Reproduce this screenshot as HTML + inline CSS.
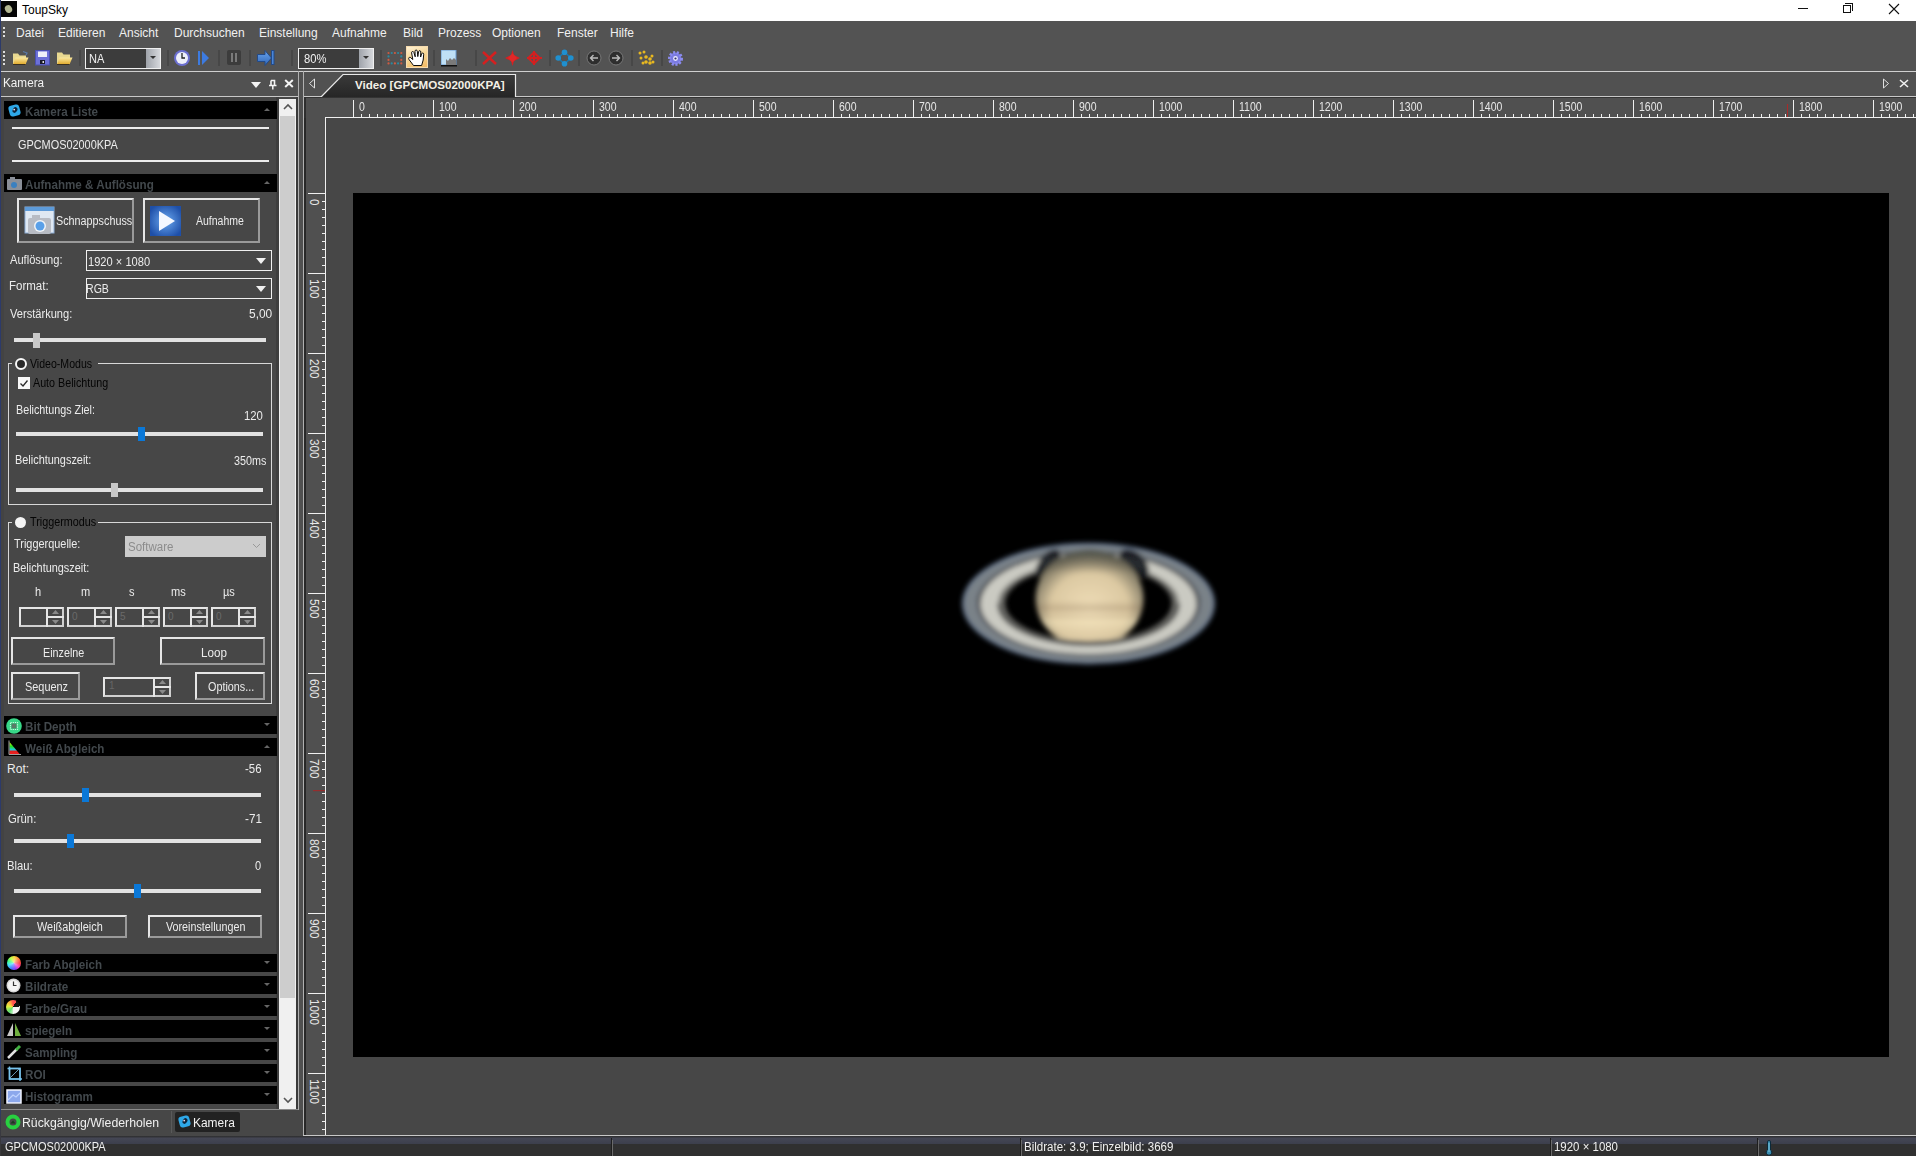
<!DOCTYPE html>
<html><head><meta charset="utf-8">
<style>
*{box-sizing:border-box}
html,body{margin:0;padding:0;width:1916px;height:1156px;overflow:hidden;background:#474747;font-family:"Liberation Sans",sans-serif;color:#e8e8e8}
.a{position:absolute}
.t{position:absolute;white-space:nowrap;line-height:1}
#title{left:0;top:0;width:1916px;height:21px;background:#fff}
#menubar{left:0;top:21px;width:1916px;height:24px;background:#535353}
#toolbar{left:0;top:45px;width:1916px;height:26px;background:#535353}
.mi{position:absolute;top:26px;font-size:12px;color:#f0f0f0;line-height:14px}
.sep{position:absolute;top:50px;width:2px;height:16px;background:#474747}
.hdr{position:absolute;left:4px;width:273px;height:18px;background:#000}
.hdr .ht{position:absolute;left:21px;top:5.2px;font-size:12.5px;font-weight:bold;color:#42484c;white-space:nowrap;line-height:1;transform-origin:0 0;transform:scaleX(.93)}
.hdr .car{position:absolute;right:7px;top:7px;width:0;height:0;border-left:3.5px solid transparent;border-right:3.5px solid transparent}
.hdr .car.up{border-bottom:3px solid #666}
.hdr .car.dn{border-top:3px solid #666}
.lbl{position:absolute;font-size:11px;color:#eaeaea;white-space:nowrap;line-height:12px}
.track{position:absolute;height:4px;background:#e2e2e2}
.thumb{position:absolute;width:7px;height:14px;background:#0a78d8}
.thumbg{position:absolute;width:7px;height:14px;background:#c8c8c8}
.btn{position:absolute;border:2px solid #e6e6e6;border-right-color:#9a9a9a;border-bottom-color:#9a9a9a;background:#474747;font-size:11px;color:#ededed;text-align:center;white-space:nowrap}
.combo{position:absolute;border:1px solid #f0f0f0;background:#474747;font-size:11px;color:#f0f0f0;white-space:nowrap}
.grp{position:absolute;border:1px solid #d8d8d8}
.tx{position:absolute;font-size:12px;line-height:1;white-space:nowrap;transform-origin:0 0}
.rl{position:absolute;font-size:11px;color:#e6e6e6;line-height:11px;white-space:nowrap}
</style></head><body>
<!-- window left border -->
<div class="a" style="left:0;top:0;width:1px;height:1110px;background:#2c3a6a;z-index:50"></div><div class="a" style="left:0;top:1110px;width:1px;height:46px;background:linear-gradient(#2c3a6a,#3a3a44 30%,#383838);z-index:50"></div>

<!-- TITLE BAR -->
<div id="title" class="a">
  <div class="a" style="left:1px;top:1px;width:16px;height:16px;background:#050505"></div>
  <div class="a" style="left:5px;top:5px;width:7px;height:8px;border-radius:50%;background:#b4b894;transform:rotate(-30deg)"></div>
  <div class="a" style="left:1798px;top:8px;width:10px;height:1px;background:#111"></div>
  <div class="a" style="left:1845px;top:3px;width:8px;height:8px;border:1px solid #111;border-left:none;border-bottom:none"></div>
  <div class="a" style="left:1843px;top:5px;width:8px;height:8px;border:1px solid #111;background:#fff"></div>
  <svg class="a" style="left:1888px;top:3px" width="12" height="12"><path d="M1 1L11 11M11 1L1 11" stroke="#111" stroke-width="1.1"/></svg>
</div>

<!-- MENU BAR -->
<div id="menubar" class="a"></div>
<div class="a" style="left:3px;top:27px;width:2px;height:12px;background:repeating-linear-gradient(#ddd 0 2px,transparent 2px 4px)"></div>
<div class="mi" style="left:16px">Datei</div>
<div class="mi" style="left:58px">Editieren</div>
<div class="mi" style="left:119px">Ansicht</div>
<div class="mi" style="left:174px">Durchsuchen</div>
<div class="mi" style="left:259px">Einstellung</div>
<div class="mi" style="left:332px">Aufnahme</div>
<div class="mi" style="left:403px">Bild</div>
<div class="mi" style="left:438px">Prozess</div>
<div class="mi" style="left:492px">Optionen</div>
<div class="mi" style="left:557px">Fenster</div>
<div class="mi" style="left:610px">Hilfe</div>

<!-- TOOLBAR -->
<div id="toolbar" class="a"></div>
<div class="a" style="left:3px;top:51px;width:2px;height:14px;background:repeating-linear-gradient(#ddd 0 2px,transparent 2px 4px)"></div>
<!-- open folder -->
<svg class="a" style="left:12px;top:50px" width="17" height="16"><defs><linearGradient id="fld" x1="0" y1="0" x2="0" y2="1"><stop offset="0" stop-color="#fbe9a0"/><stop offset="1" stop-color="#e0a828"/></linearGradient></defs><path d="M1 3.5h5l1.5 2H14v8.5H1z" fill="#e8d890"/><path d="M3.5 7.5H16.5L13.5 14.5H1z" fill="url(#fld)"/><path d="M1 14.5h12.5" stroke="#3a3020" stroke-width="1"/><path d="M11 1.5l4 1.5-1 2" stroke="#5a7aaa" stroke-width="1.3" fill="none"/></svg>
<!-- save -->
<svg class="a" style="left:35px;top:50px" width="15" height="16"><rect x="0.5" y="0.5" width="14" height="14.5" fill="#6c70d8" stroke="#4a50b0"/><rect x="3" y="1.5" width="9" height="5.5" fill="#eef0fa"/><rect x="5" y="10" width="5" height="4" fill="#1a1a2a"/><rect x="7.5" y="11" width="1.5" height="2" fill="#ddd"/></svg>
<!-- folder -->
<svg class="a" style="left:56px;top:51px" width="17" height="15"><path d="M1 1.5h5l1.5 2H14v9.5H1z" fill="#e8d890"/><path d="M3.5 6.5H16.5L13.5 13.5H1z" fill="url(#fld)"/><path d="M1 13.5h12.5" stroke="#3a3020" stroke-width="1"/></svg>
<div class="sep" style="left:79px"></div>
<!-- NA combo -->
<div class="a" style="left:85px;top:48px;width:76px;height:21px;border:1px solid #f0f0f0;background:#3c3c3c"></div>
<div class="a" style="left:146px;top:49px;width:14px;height:19px;background:linear-gradient(90deg,#9fa3aa,#d6d8dc)"></div>
<div class="a" style="left:150px;top:56px;width:0;height:0;border-left:3px solid transparent;border-right:3px solid transparent;border-top:3px solid #333"></div>
<div class="sep" style="left:167px"></div>
<!-- clock -->
<svg class="a" style="left:173px;top:49px" width="18" height="18"><circle cx="9" cy="9" r="8" fill="#6b6fd0"/><circle cx="9" cy="9" r="6" fill="#eef0fa"/><path d="M9 4v5h3" stroke="#222" stroke-width="1.3" fill="none"/></svg>
<!-- play next -->
<svg class="a" style="left:198px;top:50px" width="12" height="16"><rect x="0" y="1" width="2" height="14" fill="#3d7be0"/><path d="M4 1l7 7-7 7z" fill="#3d7be0"/></svg>
<div class="sep" style="left:218px"></div>
<!-- pause -->
<svg class="a" style="left:227px;top:50px" width="14" height="15"><rect x="0" y="0" width="14" height="15" rx="2" fill="#3c3c3c"/><rect x="4" y="3" width="2" height="9" fill="#7a7a7a"/><rect x="8" y="3" width="2" height="9" fill="#7a7a7a"/></svg>
<div class="sep" style="left:249px"></div>
<!-- arrow to bar -->
<svg class="a" style="left:256px;top:49px" width="20" height="18"><defs><linearGradient id="arg" x1="0" y1="0" x2="0" y2="1"><stop offset="0" stop-color="#6aa4ec"/><stop offset="1" stop-color="#2f66b8"/></linearGradient></defs><path d="M1.5 5.5h7.5V1.5l6.5 7.5-6.5 7.5v-4H1.5z" fill="url(#arg)" stroke="#234a88" stroke-width="1"/><rect x="15.5" y="1.5" width="2.5" height="14" fill="#4a86d8" stroke="#234a88" stroke-width="1"/></svg>
<div class="sep" style="left:291px"></div>
<!-- 80% combo -->
<div class="a" style="left:298px;top:48px;width:76px;height:21px;border:1px solid #f0f0f0;background:#3c3c3c"></div>
<div class="a" style="left:359px;top:49px;width:14px;height:19px;background:linear-gradient(90deg,#9fa3aa,#d6d8dc)"></div>
<div class="a" style="left:363px;top:56px;width:0;height:0;border-left:3px solid transparent;border-right:3px solid transparent;border-top:3px solid #333"></div>
<div class="sep" style="left:380px"></div>
<!-- dotted rect -->
<svg class="a" style="left:386px;top:51px" width="17" height="15"><circle cx="2.5" cy="2" r="1.1" fill="#d05a40"/><circle cx="2.5" cy="12.4" r="1.1" fill="#d05a40"/><circle cx="5.7" cy="2" r="1.1" fill="#2a8aa0"/><circle cx="5.7" cy="12.4" r="1.1" fill="#2a8aa0"/><circle cx="8.9" cy="2" r="1.1" fill="#d05a40"/><circle cx="8.9" cy="12.4" r="1.1" fill="#d05a40"/><circle cx="12.1" cy="2" r="1.1" fill="#2a8aa0"/><circle cx="12.1" cy="12.4" r="1.1" fill="#2a8aa0"/><circle cx="15.3" cy="2" r="1.1" fill="#d05a40"/><circle cx="15.3" cy="12.4" r="1.1" fill="#d05a40"/><circle cx="2.5" cy="5.4" r="1.1" fill="#2a8aa0"/><circle cx="15.3" cy="5.4" r="1.1" fill="#2a8aa0"/><circle cx="2.5" cy="8.9" r="1.1" fill="#d05a40"/><circle cx="15.3" cy="8.9" r="1.1" fill="#d05a40"/></svg>
<!-- hand active -->
<div class="a" style="left:406px;top:46px;width:22px;height:22px;background:linear-gradient(160deg,#fff4dc,#f8d898 45%,#f2b860);box-shadow:inset 0 0 0 1px #f6dcb0"></div>
<svg class="a" style="left:408px;top:49px" width="18" height="18"><path d="M5.5 16.5L1 10.5C0.3 9.5 0.8 8 2.2 8.3L4.8 10.5 3.6 3.8C3.4 2.3 5.4 2 5.8 3.3L7.2 7.8 7 2.2C7 0.6 9.2 0.6 9.3 2.2L9.8 7.6 10.6 2.6C10.9 1.2 12.8 1.4 12.8 2.9L12.6 8 13.6 4.8C14 3.6 15.8 3.8 15.7 5.2L15.2 11 13.6 16.5z" fill="#fff" stroke="#000" stroke-width="0.95" stroke-linejoin="round"/></svg>
<div class="sep" style="left:433px"></div>
<!-- histogram img -->
<svg class="a" style="left:441px;top:50px" width="17" height="17"><rect x="0" y="0" width="15" height="15" fill="#bfe0f6" stroke="#6b9bd1"/><path d="M5 15V9l2 2 2-3 2 2 2-2 2 2v5z" fill="#7a7a7a"/><rect x="0" y="15" width="16" height="1.5" fill="#111"/></svg>
<div class="sep" style="left:475px"></div>
<!-- red X -->
<svg class="a" style="left:481px;top:50px" width="17" height="16"><path d="M2 2L15 14M15 2L2 14" stroke="#d42020" stroke-width="2.5"/></svg>
<!-- red cross -->
<svg class="a" style="left:504px;top:50px" width="17" height="16"><path d="M8.5 0L10 5 16 8 10 11 8.5 16 7 11 1 8 7 5z" fill="#d42020"/><path d="M8.5 3.5L13 8 8.5 12.5 4 8z" fill="#e02828"/></svg>
<!-- red diamond -->
<svg class="a" style="left:526px;top:50px" width="17" height="16"><path d="M8 1v14M1 8h15" stroke="#d42020" stroke-width="2"/><rect x="4" y="4" width="8" height="8" fill="none" stroke="#d42020" stroke-width="2" transform="rotate(45 8 8)"/></svg>
<div class="sep" style="left:549px"></div>
<!-- blue dots -->
<svg class="a" style="left:555px;top:49px" width="19" height="18"><path d="M9.5 3L3 9 9.5 15 16 9z" fill="none" stroke="#1a7ab0" stroke-width="1.5"/><circle cx="9.5" cy="3.2" r="2.8" fill="#1f90d0"/><circle cx="9.5" cy="14.8" r="2.8" fill="#1f90d0"/><circle cx="3.2" cy="9" r="2.8" fill="#1f90d0"/><circle cx="15.8" cy="9" r="2.8" fill="#1f90d0"/></svg>
<div class="sep" style="left:578px"></div>
<!-- circle arrows -->
<svg class="a" style="left:586px;top:50px" width="16" height="16"><circle cx="8" cy="8" r="7" fill="#2e2e2e" stroke="#777" stroke-width="1"/><path d="M12 8H4.5M7.5 5l-3 3 3 3" stroke="#bbb" stroke-width="1.4" fill="none"/></svg>
<svg class="a" style="left:608px;top:50px" width="16" height="16"><circle cx="8" cy="8" r="7" fill="#2e2e2e" stroke="#777" stroke-width="1"/><path d="M4 8h7.5M8.5 5l3 3-3 3" stroke="#bbb" stroke-width="1.4" fill="none"/></svg>
<div class="sep" style="left:631px"></div>
<!-- yellow dots -->
<svg class="a" style="left:638px;top:50px" width="17" height="16"><g fill="#e8b820"><circle cx="2" cy="3" r="1.5"/><circle cx="6" cy="2" r="1.5"/><circle cx="3" cy="8" r="1.5"/><circle cx="8" cy="7" r="1.8"/><circle cx="12" cy="9" r="1.8"/><circle cx="14" cy="6" r="1.5"/><circle cx="8" cy="12" r="1.8"/><circle cx="12" cy="13" r="1.8"/><circle cx="15" cy="12" r="1.5"/><circle cx="5" cy="13" r="1.5"/></g></svg>
<div class="sep" style="left:661px"></div>
<!-- gear -->
<svg class="a" style="left:667px;top:50px" width="17" height="17"><circle cx="8.5" cy="8.5" r="6" fill="#7a7ae0" stroke="#8c8cf0" stroke-width="3" stroke-dasharray="2 1.6"/><circle cx="8.5" cy="8.5" r="2.4" fill="#e8e8ff"/><circle cx="8.5" cy="8.5" r="1.1" fill="#30306a"/></svg>

<!-- separator line under toolbar -->
<div class="a" style="left:1px;top:71px;width:1915px;height:1px;background:#d0d0d0"></div>

<!-- LEFT PANEL -->
<div class="a" style="left:1px;top:72px;width:297px;height:24px;background:#515151"></div>
<div class="a" style="left:251px;top:82px;width:0;height:0;border-left:5px solid transparent;border-right:5px solid transparent;border-top:6px solid #f4f4f4"></div>
<svg class="a" style="left:268px;top:79px" width="9" height="11"><path d="M3 1.5h3.5v4.5M3 1.5v4.5" stroke="#f4f4f4" stroke-width="1.6" fill="none"/><path d="M1 6.5h7.5M4.8 6.5v4" stroke="#f4f4f4" stroke-width="1.5" fill="none"/></svg>
<svg class="a" style="left:284px;top:79px" width="10" height="9"><path d="M1.2 1L8.8 8M8.8 1L1.2 8" stroke="#f4f4f4" stroke-width="2"/></svg>
<div class="a" style="left:298px;top:71px;width:1px;height:1039px;background:#b0b0b0"></div>
<div class="a" style="left:1px;top:96px;width:297px;height:1px;background:#c8c8c8"></div>
<div class="a" style="left:299px;top:72px;width:4px;height:1063px;background:#505050"></div>
<!-- scrollbar -->
<div class="a" style="left:276px;top:97px;width:3px;height:1012px;background:#3e3e3e"></div><div class="a" style="left:279px;top:99px;width:17px;height:1010px;background:#f0f0f0"></div><div class="a" style="left:296px;top:97px;width:2px;height:1012px;background:#3a3a3a"></div><div class="a" style="left:1px;top:97px;width:3px;height:1012px;background:#434343"></div>
<div class="a" style="left:280px;top:116px;width:15px;height:882px;background:#cdcdcd"></div>
<svg class="a" style="left:282px;top:103px" width="12" height="8"><path d="M2 6l4-4 4 4" stroke="#555" stroke-width="1.6" fill="none"/></svg>
<svg class="a" style="left:282px;top:1096px" width="12" height="8"><path d="M2 2l4 4 4-4" stroke="#555" stroke-width="1.6" fill="none"/></svg>

<!-- Kamera Liste -->
<div class="hdr" style="top:101px"><svg class="a" style="left:3px;top:2px" width="15" height="15"><rect x="2" y="2" width="11" height="11" rx="3" fill="#2ea8e8" transform="rotate(-15 7.5 7.5)"/><ellipse cx="8" cy="7" rx="2.2" ry="3" fill="#10243a" transform="rotate(30 8 7)"/><circle cx="7.2" cy="6.6" r="0.9" fill="#f0e0f0"/></svg><div class="ht">Kamera Liste</div><div class="car up"></div></div>
<div class="a" style="left:12px;top:127px;width:257px;height:2px;background:#ececec"></div>
<div class="a" style="left:12px;top:160px;width:257px;height:2px;background:#ececec"></div>

<!-- Aufnahme & Auflösung -->
<div class="hdr" style="top:174px"><svg class="a" style="left:3px;top:3px" width="16" height="13"><rect x="0" y="2" width="15" height="11" rx="1" fill="#8a8f98"/><rect x="3" y="0" width="5" height="3" fill="#8a8f98"/><circle cx="7" cy="8" r="3" fill="#3a80c0"/></svg><div class="ht">Aufnahme &amp; Auflösung</div><div class="car up"></div></div>
<div class="btn" style="left:17px;top:198px;width:117px;height:45px"></div>
<svg class="a" style="left:24px;top:206px" width="32" height="31"><rect x="1" y="1" width="29" height="26" fill="#dfe8f2" stroke="#8fb0d8"/><rect x="1" y="1" width="29" height="4" fill="#5c9ad8"/><rect x="4" y="12" width="23" height="16" rx="2" fill="#b8bcc4"/><rect x="8" y="9" width="8" height="4" fill="#b8bcc4"/><circle cx="16" cy="20" r="6" fill="#f0f4f8"/><circle cx="16" cy="20" r="4.5" fill="#5aa0e8"/></svg>
<div class="btn" style="left:143px;top:198px;width:117px;height:45px"></div>
<svg class="a" style="left:150px;top:206px" width="31" height="30"><defs><radialGradient id="pg" cx="50%" cy="50%" r="60%"><stop offset="0" stop-color="#6aa8f0"/><stop offset="1" stop-color="#1e4fa8"/></radialGradient></defs><rect x="0" y="0" width="31" height="30" fill="url(#pg)"/><path d="M9 5l16 10-16 10z" fill="#f4f8ff"/></svg>

<div class="combo" style="left:86px;top:250px;width:186px;height:21px"></div>
<div class="a" style="left:256px;top:258px;width:0;height:0;border-left:5px solid transparent;border-right:5px solid transparent;border-top:6px solid #f0f0f0"></div>
<div class="combo" style="left:86px;top:278px;width:186px;height:21px"></div>
<div class="a" style="left:256px;top:286px;width:0;height:0;border-left:5px solid transparent;border-right:5px solid transparent;border-top:6px solid #f0f0f0"></div>
<div class="track" style="left:14px;top:338px;width:252px"></div>
<div class="thumbg" style="left:33px;top:333px;height:15px"></div>

<!-- Video-Modus group -->
<div class="grp" style="left:8px;top:363px;width:264px;height:142px"></div>
<div class="a" style="left:12px;top:356px;width:86px;height:14px;background:#474747"></div>
<div class="a" style="left:15px;top:358px;width:12px;height:12px;border-radius:50%;border:2px solid #f8f8f8;background:#2a2a2a"></div>
<div class="a" style="left:18px;top:377px;width:12px;height:12px;background:#f8f8f8"></div>
<svg class="a" style="left:19px;top:378px" width="10" height="10"><path d="M1.5 5.5l2.5 2.5 4.5-5.5" stroke="#2a2a2a" stroke-width="1.3" fill="none"/></svg>
<div class="track" style="left:16px;top:432px;width:247px"></div>
<div class="thumb" style="left:138px;top:427px;width:7px"></div>
<div class="track" style="left:16px;top:488px;width:247px"></div>
<div class="thumbg" style="left:111px;top:483px;width:7px"></div>

<!-- Triggermodus group -->
<div class="grp" style="left:8px;top:522px;width:264px;height:182px"></div>
<div class="a" style="left:12px;top:515px;width:86px;height:14px;background:#474747"></div>
<div class="a" style="left:15px;top:517px;width:11px;height:11px;border-radius:50%;background:#f4f4f4"></div>
<div class="a" style="left:125px;top:536px;width:141px;height:21px;background:#cccccc"></div>
<svg class="a" style="left:252px;top:543px" width="9" height="6"><path d="M1 1l3.5 3.5L8 1" stroke="#999" fill="none"/></svg>
<div class="t" style="left:72px;top:612px;font-size:10px;color:#6a6a6a">0</div>
<div class="t" style="left:120px;top:612px;font-size:10px;color:#6a6a6a">5</div>
<div class="t" style="left:168px;top:612px;font-size:10px;color:#6a6a6a">0</div>
<div class="t" style="left:216px;top:612px;font-size:10px;color:#6a6a6a">0</div>

<div class="a" style="left:19px;top:607px;width:45px;height:20px;border:2px solid #e6e6e6;border-right-color:#d0d0d0;border-bottom-color:#d0d0d0"></div>
<div class="a" style="left:46px;top:607px;width:2px;height:20px;background:#e6e6e6"></div>
<div class="a" style="left:46px;top:616px;width:18px;height:2px;background:#e6e6e6"></div>
<svg class="a" style="left:52px;top:610px" width="7" height="4"><path d="M0 4L3.5 0 7 4z" fill="#8a8a8a"/></svg>
<svg class="a" style="left:52px;top:620px" width="7" height="4"><path d="M0 0L3.5 4 7 0z" fill="#8a8a8a"/></svg>
<div class="a" style="left:67px;top:607px;width:45px;height:20px;border:2px solid #e6e6e6;border-right-color:#d0d0d0;border-bottom-color:#d0d0d0"></div>
<div class="a" style="left:94px;top:607px;width:2px;height:20px;background:#e6e6e6"></div>
<div class="a" style="left:94px;top:616px;width:18px;height:2px;background:#e6e6e6"></div>
<svg class="a" style="left:100px;top:610px" width="7" height="4"><path d="M0 4L3.5 0 7 4z" fill="#8a8a8a"/></svg>
<svg class="a" style="left:100px;top:620px" width="7" height="4"><path d="M0 0L3.5 4 7 0z" fill="#8a8a8a"/></svg>
<div class="a" style="left:115px;top:607px;width:45px;height:20px;border:2px solid #e6e6e6;border-right-color:#d0d0d0;border-bottom-color:#d0d0d0"></div>
<div class="a" style="left:142px;top:607px;width:2px;height:20px;background:#e6e6e6"></div>
<div class="a" style="left:142px;top:616px;width:18px;height:2px;background:#e6e6e6"></div>
<svg class="a" style="left:148px;top:610px" width="7" height="4"><path d="M0 4L3.5 0 7 4z" fill="#8a8a8a"/></svg>
<svg class="a" style="left:148px;top:620px" width="7" height="4"><path d="M0 0L3.5 4 7 0z" fill="#8a8a8a"/></svg>
<div class="a" style="left:163px;top:607px;width:45px;height:20px;border:2px solid #e6e6e6;border-right-color:#d0d0d0;border-bottom-color:#d0d0d0"></div>
<div class="a" style="left:190px;top:607px;width:2px;height:20px;background:#e6e6e6"></div>
<div class="a" style="left:190px;top:616px;width:18px;height:2px;background:#e6e6e6"></div>
<svg class="a" style="left:196px;top:610px" width="7" height="4"><path d="M0 4L3.5 0 7 4z" fill="#8a8a8a"/></svg>
<svg class="a" style="left:196px;top:620px" width="7" height="4"><path d="M0 0L3.5 4 7 0z" fill="#8a8a8a"/></svg>
<div class="a" style="left:211px;top:607px;width:45px;height:20px;border:2px solid #e6e6e6;border-right-color:#d0d0d0;border-bottom-color:#d0d0d0"></div>
<div class="a" style="left:238px;top:607px;width:2px;height:20px;background:#e6e6e6"></div>
<div class="a" style="left:238px;top:616px;width:18px;height:2px;background:#e6e6e6"></div>
<svg class="a" style="left:244px;top:610px" width="7" height="4"><path d="M0 4L3.5 0 7 4z" fill="#8a8a8a"/></svg>
<svg class="a" style="left:244px;top:620px" width="7" height="4"><path d="M0 0L3.5 4 7 0z" fill="#8a8a8a"/></svg>
<div class="btn" style="left:11px;top:637px;width:104px;height:28px;line-height:24px"></div>
<div class="btn" style="left:160px;top:637px;width:105px;height:28px;line-height:24px"></div>
<div class="btn" style="left:11px;top:672px;width:69px;height:28px;line-height:24px"></div>
<div class="a" style="left:103px;top:677px;width:68px;height:20px;border:2px solid #e6e6e6;border-right-color:#d0d0d0;border-bottom-color:#d0d0d0"></div>
<div class="a" style="left:153px;top:677px;width:2px;height:20px;background:#e6e6e6"></div>
<div class="a" style="left:153px;top:686px;width:18px;height:2px;background:#e6e6e6"></div>
<svg class="a" style="left:159px;top:680px" width="7" height="4"><path d="M0 4L3.5 0 7 4z" fill="#8a8a8a"/></svg>
<svg class="a" style="left:159px;top:690px" width="7" height="4"><path d="M0 0L3.5 4 7 0z" fill="#8a8a8a"/></svg>
<div class="t" style="left:109px;top:681px;font-size:10px;color:#666">1</div>
<div class="btn" style="left:195px;top:672px;width:70px;height:28px;line-height:24px"></div>

<!-- Bit Depth -->
<div class="hdr" style="top:716px"><svg class="a" style="left:2px;top:2px" width="16" height="16"><circle cx="8" cy="8" r="7.8" fill="#38d888"/><rect x="4.5" y="4.5" width="7" height="7" fill="none" stroke="#c8ffe0" stroke-width="1.2" stroke-dasharray="1.2 1"/><rect x="5.5" y="5.5" width="5" height="5" fill="#5a7a68"/></svg><div class="ht">Bit Depth</div><div class="car dn"></div></div>
<!-- Weiß Abgleich -->
<div class="hdr" style="top:738px"><svg class="a" style="left:0px;top:1px" width="17" height="17"><defs><linearGradient id="wbg" x1="0" y1="0" x2="0" y2="1"><stop offset="0" stop-color="#f0f020"/><stop offset=".35" stop-color="#20e020"/><stop offset=".62" stop-color="#20c8e0"/><stop offset=".75" stop-color="#e02020"/><stop offset="1" stop-color="#f02020"/></linearGradient></defs><path d="M5.5 3L16 15.5H5.5z" fill="url(#wbg)"/><path d="M5 1.5V15.5H17" stroke="#a0a0a0" stroke-width="1" fill="none"/></svg><div class="ht">Weiß Abgleich</div><div class="car up"></div></div>
<div class="track" style="left:14px;top:793px;width:247px"></div>
<div class="thumb" style="left:82px;top:788px;width:7px"></div>
<div class="track" style="left:14px;top:839px;width:247px"></div>
<div class="thumb" style="left:67px;top:834px;width:7px"></div>
<div class="track" style="left:14px;top:889px;width:247px"></div>
<div class="thumb" style="left:134px;top:884px;width:7px"></div>
<div class="btn" style="left:13px;top:915px;width:114px;height:23px;line-height:19px"></div>
<div class="btn" style="left:148px;top:915px;width:114px;height:23px;line-height:19px"></div>

<div class="hdr" style="top:954px"><div class="a" style="left:3px;top:2px;width:14px;height:14px;border-radius:50%;background:radial-gradient(circle,rgba(255,255,255,.55) 0,rgba(255,255,255,0) 60%),conic-gradient(from 90deg,#ff4040,#ff40c0,#8040ff,#4080ff,#40e0ff,#40ff80,#c0ff40,#ffd040,#ff8040,#ff4040)"></div><div class="ht">Farb Abgleich</div><div class="car dn"></div></div>
<div class="hdr" style="top:976px"><svg class="a" style="left:2px;top:2px" width="15" height="15"><circle cx="7.5" cy="7.5" r="7" fill="#d8d8d8"/><circle cx="7.5" cy="7.5" r="5.5" fill="#f4f4f4"/><path d="M7.5 3.5v4h3" stroke="#333" stroke-width="1.2" fill="none"/></svg><div class="ht">Bildrate</div><div class="car dn"></div></div>
<div class="hdr" style="top:998px"><div class="a" style="left:2px;top:2px;width:14px;height:14px;border-radius:50%;background:conic-gradient(from 30deg,#101010 0 55deg,#f4f4f4 55deg 150deg,#c8f0c8 150deg,#60e070 190deg,#e8f040 250deg,#ffa040 300deg,#ff5050 330deg,#ff5050 360deg)"></div><div class="ht">Farbe/Grau</div><div class="car dn"></div></div>
<div class="hdr" style="top:1020px"><svg class="a" style="left:2px;top:2px" width="16" height="15"><path d="M7 1L1 14h6z" fill="#c8c8c8"/><path d="M9 1l6 13H9z" fill="#70b040"/></svg><div class="ht">spiegeln</div><div class="car dn"></div></div>
<div class="hdr" style="top:1042px"><svg class="a" style="left:2px;top:2px" width="16" height="15"><path d="M2 14l9-9" stroke="#e0e0e0" stroke-width="2.5"/><path d="M10 6l4-4" stroke="#40b040" stroke-width="3"/></svg><div class="ht">Sampling</div><div class="car dn"></div></div>
<div class="hdr" style="top:1064px"><svg class="a" style="left:3px;top:2px" width="15" height="15"><rect x="2.5" y="2.5" width="10.5" height="10.5" fill="none" stroke="#78c4ee" stroke-width="1.8"/><path d="M3 12L12 3" stroke="#6a9ab8" stroke-width="1"/><path d="M0.5 2.5h3M2.5 0.5v3M12 13h3M13 12v3" stroke="#78c4ee" stroke-width="1.4"/></svg><div class="ht">ROI</div><div class="car dn"></div></div>
<div class="hdr" style="top:1086px"><svg class="a" style="left:2px;top:3px" width="16" height="15"><rect x="1" y="1" width="14" height="13" fill="#8ca8ec" stroke="#f4f6ff" stroke-width="1.5"/><path d="M2 11l5-5 3 2 4-4" stroke="#c0d4ff" fill="none" stroke-width="1.2"/></svg><div class="ht">Histogramm</div><div class="car dn"></div></div>


<!-- bottom tabs -->
<div class="a" style="left:1px;top:1109px;width:297px;height:1px;background:#8a8a8a"></div>
<div class="a" style="left:1px;top:1110px;width:302px;height:25px;background:#474747"></div>
<svg class="a" style="left:5px;top:1114px" width="16" height="16"><circle cx="8" cy="8" r="5.5" fill="none" stroke="#28d040" stroke-width="4"/><path d="M5.5 9.5l2.5-3 2.5 3z" fill="#1a3a20"/></svg>
<div class="a" style="left:171px;top:1111px;width:1px;height:22px;background:#5a5a5a"></div>
<div class="a" style="left:175px;top:1112px;width:65px;height:20px;background:#222;border-radius:2px"></div>
<svg class="a" style="left:177px;top:1114px" width="15" height="15"><rect x="2" y="2" width="11" height="11" rx="3" fill="#2ea8e8" transform="rotate(-15 7.5 7.5)"/><ellipse cx="8" cy="7" rx="2.2" ry="3" fill="#10243a" transform="rotate(30 8 7)"/><circle cx="7.2" cy="6.6" r="0.9" fill="#f0e0f0"/></svg>

<!-- DOC AREA -->
<div class="a" style="left:303px;top:71px;width:1px;height:1065px;background:#b0b0b0"></div>
<div class="a" style="left:304px;top:72px;width:1612px;height:24px;background:#515151"></div>
<div class="a" style="left:304px;top:96px;width:1612px;height:1px;background:#c8c8c8"></div>
<svg class="a" style="left:304px;top:72px" width="220" height="26"><defs><linearGradient id="tabg" x1="0" y1="0" x2="0" y2="1"><stop offset="0" stop-color="#3a3a3a"/><stop offset="1" stop-color="#262626"/></linearGradient></defs><path d="M17 25L39 2.5H211.5V25z" fill="url(#tabg)"/><path d="M16.5 25.5L39 2.5H211.5V25" stroke="#e8e8e8" stroke-width="1.2" fill="none"/></svg>
<div class="t" style="left:355px;top:79px;font-size:11.6px;font-weight:bold;color:#f4f0e6">Video [GPCMOS02000KPA]</div>
<svg class="a" style="left:308px;top:78px" width="8" height="11"><path d="M6.5 1L1.5 5.5 6.5 10z" stroke="#e0e0e0" stroke-width="1" fill="none"/></svg>
<svg class="a" style="left:1882px;top:78px" width="8" height="11"><path d="M1.5 1L6.5 5.5 1.5 10z" stroke="#e0e0e0" stroke-width="1" fill="none"/></svg>
<svg class="a" style="left:1899px;top:79px" width="10" height="9"><path d="M1 1L9 8M9 1L1 8" stroke="#f0f0f0" stroke-width="1.6"/></svg>
<div class="a" style="left:304px;top:97px;width:1612px;height:21px;background:#505050;border-top:1px solid #333"></div>
<div class="a" style="left:304px;top:118px;width:21px;height:1017px;background:linear-gradient(90deg,#282828 0 2px,#505050 2px)"></div><div class="a" style="left:304px;top:97px;width:2px;height:21px;background:#2e2e2e"></div>
<div class="a" style="left:326px;top:118px;width:1590px;height:1017px;background:#474747"></div>
<div class="a" style="left:325px;top:117px;width:1591px;height:1px;background:#f0f0f0"></div>
<div class="a" style="left:325px;top:117px;width:1px;height:1018px;background:#f0f0f0"></div>
<div class="a" style="left:303px;top:1135px;width:1613px;height:1px;background:#c8c8c8"></div>
<svg class="a" style="left:0;top:97px" width="1916" height="21"><g fill="#f0f0f0"><rect x="353" y="3" width="1" height="17"/><rect x="361" y="17" width="1" height="3"/><rect x="369" y="17" width="1" height="3"/><rect x="377" y="17" width="1" height="3"/><rect x="385" y="17" width="1" height="3"/><rect x="393" y="17" width="1" height="3"/><rect x="401" y="17" width="1" height="3"/><rect x="409" y="17" width="1" height="3"/><rect x="417" y="17" width="1" height="3"/><rect x="425" y="17" width="1" height="3"/><rect x="433" y="3" width="1" height="17"/><rect x="441" y="17" width="1" height="3"/><rect x="449" y="17" width="1" height="3"/><rect x="457" y="17" width="1" height="3"/><rect x="465" y="17" width="1" height="3"/><rect x="473" y="17" width="1" height="3"/><rect x="481" y="17" width="1" height="3"/><rect x="489" y="17" width="1" height="3"/><rect x="497" y="17" width="1" height="3"/><rect x="505" y="17" width="1" height="3"/><rect x="513" y="3" width="1" height="17"/><rect x="521" y="17" width="1" height="3"/><rect x="529" y="17" width="1" height="3"/><rect x="537" y="17" width="1" height="3"/><rect x="545" y="17" width="1" height="3"/><rect x="553" y="17" width="1" height="3"/><rect x="561" y="17" width="1" height="3"/><rect x="569" y="17" width="1" height="3"/><rect x="577" y="17" width="1" height="3"/><rect x="585" y="17" width="1" height="3"/><rect x="593" y="3" width="1" height="17"/><rect x="601" y="17" width="1" height="3"/><rect x="609" y="17" width="1" height="3"/><rect x="617" y="17" width="1" height="3"/><rect x="625" y="17" width="1" height="3"/><rect x="633" y="17" width="1" height="3"/><rect x="641" y="17" width="1" height="3"/><rect x="649" y="17" width="1" height="3"/><rect x="657" y="17" width="1" height="3"/><rect x="665" y="17" width="1" height="3"/><rect x="673" y="3" width="1" height="17"/><rect x="681" y="17" width="1" height="3"/><rect x="689" y="17" width="1" height="3"/><rect x="697" y="17" width="1" height="3"/><rect x="705" y="17" width="1" height="3"/><rect x="713" y="17" width="1" height="3"/><rect x="721" y="17" width="1" height="3"/><rect x="729" y="17" width="1" height="3"/><rect x="737" y="17" width="1" height="3"/><rect x="745" y="17" width="1" height="3"/><rect x="753" y="3" width="1" height="17"/><rect x="761" y="17" width="1" height="3"/><rect x="769" y="17" width="1" height="3"/><rect x="777" y="17" width="1" height="3"/><rect x="785" y="17" width="1" height="3"/><rect x="793" y="17" width="1" height="3"/><rect x="801" y="17" width="1" height="3"/><rect x="809" y="17" width="1" height="3"/><rect x="817" y="17" width="1" height="3"/><rect x="825" y="17" width="1" height="3"/><rect x="833" y="3" width="1" height="17"/><rect x="841" y="17" width="1" height="3"/><rect x="849" y="17" width="1" height="3"/><rect x="857" y="17" width="1" height="3"/><rect x="865" y="17" width="1" height="3"/><rect x="873" y="17" width="1" height="3"/><rect x="881" y="17" width="1" height="3"/><rect x="889" y="17" width="1" height="3"/><rect x="897" y="17" width="1" height="3"/><rect x="905" y="17" width="1" height="3"/><rect x="913" y="3" width="1" height="17"/><rect x="921" y="17" width="1" height="3"/><rect x="929" y="17" width="1" height="3"/><rect x="937" y="17" width="1" height="3"/><rect x="945" y="17" width="1" height="3"/><rect x="953" y="17" width="1" height="3"/><rect x="961" y="17" width="1" height="3"/><rect x="969" y="17" width="1" height="3"/><rect x="977" y="17" width="1" height="3"/><rect x="985" y="17" width="1" height="3"/><rect x="993" y="3" width="1" height="17"/><rect x="1001" y="17" width="1" height="3"/><rect x="1009" y="17" width="1" height="3"/><rect x="1017" y="17" width="1" height="3"/><rect x="1025" y="17" width="1" height="3"/><rect x="1033" y="17" width="1" height="3"/><rect x="1041" y="17" width="1" height="3"/><rect x="1049" y="17" width="1" height="3"/><rect x="1057" y="17" width="1" height="3"/><rect x="1065" y="17" width="1" height="3"/><rect x="1073" y="3" width="1" height="17"/><rect x="1081" y="17" width="1" height="3"/><rect x="1089" y="17" width="1" height="3"/><rect x="1097" y="17" width="1" height="3"/><rect x="1105" y="17" width="1" height="3"/><rect x="1113" y="17" width="1" height="3"/><rect x="1121" y="17" width="1" height="3"/><rect x="1129" y="17" width="1" height="3"/><rect x="1137" y="17" width="1" height="3"/><rect x="1145" y="17" width="1" height="3"/><rect x="1153" y="3" width="1" height="17"/><rect x="1161" y="17" width="1" height="3"/><rect x="1169" y="17" width="1" height="3"/><rect x="1177" y="17" width="1" height="3"/><rect x="1185" y="17" width="1" height="3"/><rect x="1193" y="17" width="1" height="3"/><rect x="1201" y="17" width="1" height="3"/><rect x="1209" y="17" width="1" height="3"/><rect x="1217" y="17" width="1" height="3"/><rect x="1225" y="17" width="1" height="3"/><rect x="1233" y="3" width="1" height="17"/><rect x="1241" y="17" width="1" height="3"/><rect x="1249" y="17" width="1" height="3"/><rect x="1257" y="17" width="1" height="3"/><rect x="1265" y="17" width="1" height="3"/><rect x="1273" y="17" width="1" height="3"/><rect x="1281" y="17" width="1" height="3"/><rect x="1289" y="17" width="1" height="3"/><rect x="1297" y="17" width="1" height="3"/><rect x="1305" y="17" width="1" height="3"/><rect x="1313" y="3" width="1" height="17"/><rect x="1321" y="17" width="1" height="3"/><rect x="1329" y="17" width="1" height="3"/><rect x="1337" y="17" width="1" height="3"/><rect x="1345" y="17" width="1" height="3"/><rect x="1353" y="17" width="1" height="3"/><rect x="1361" y="17" width="1" height="3"/><rect x="1369" y="17" width="1" height="3"/><rect x="1377" y="17" width="1" height="3"/><rect x="1385" y="17" width="1" height="3"/><rect x="1393" y="3" width="1" height="17"/><rect x="1401" y="17" width="1" height="3"/><rect x="1409" y="17" width="1" height="3"/><rect x="1417" y="17" width="1" height="3"/><rect x="1425" y="17" width="1" height="3"/><rect x="1433" y="17" width="1" height="3"/><rect x="1441" y="17" width="1" height="3"/><rect x="1449" y="17" width="1" height="3"/><rect x="1457" y="17" width="1" height="3"/><rect x="1465" y="17" width="1" height="3"/><rect x="1473" y="3" width="1" height="17"/><rect x="1481" y="17" width="1" height="3"/><rect x="1489" y="17" width="1" height="3"/><rect x="1497" y="17" width="1" height="3"/><rect x="1505" y="17" width="1" height="3"/><rect x="1513" y="17" width="1" height="3"/><rect x="1521" y="17" width="1" height="3"/><rect x="1529" y="17" width="1" height="3"/><rect x="1537" y="17" width="1" height="3"/><rect x="1545" y="17" width="1" height="3"/><rect x="1553" y="3" width="1" height="17"/><rect x="1561" y="17" width="1" height="3"/><rect x="1569" y="17" width="1" height="3"/><rect x="1577" y="17" width="1" height="3"/><rect x="1585" y="17" width="1" height="3"/><rect x="1593" y="17" width="1" height="3"/><rect x="1601" y="17" width="1" height="3"/><rect x="1609" y="17" width="1" height="3"/><rect x="1617" y="17" width="1" height="3"/><rect x="1625" y="17" width="1" height="3"/><rect x="1633" y="3" width="1" height="17"/><rect x="1641" y="17" width="1" height="3"/><rect x="1649" y="17" width="1" height="3"/><rect x="1657" y="17" width="1" height="3"/><rect x="1665" y="17" width="1" height="3"/><rect x="1673" y="17" width="1" height="3"/><rect x="1681" y="17" width="1" height="3"/><rect x="1689" y="17" width="1" height="3"/><rect x="1697" y="17" width="1" height="3"/><rect x="1705" y="17" width="1" height="3"/><rect x="1713" y="3" width="1" height="17"/><rect x="1721" y="17" width="1" height="3"/><rect x="1729" y="17" width="1" height="3"/><rect x="1737" y="17" width="1" height="3"/><rect x="1745" y="17" width="1" height="3"/><rect x="1753" y="17" width="1" height="3"/><rect x="1761" y="17" width="1" height="3"/><rect x="1769" y="17" width="1" height="3"/><rect x="1777" y="17" width="1" height="3"/><rect x="1785" y="17" width="1" height="3"/><rect x="1793" y="3" width="1" height="17"/><rect x="1801" y="17" width="1" height="3"/><rect x="1809" y="17" width="1" height="3"/><rect x="1817" y="17" width="1" height="3"/><rect x="1825" y="17" width="1" height="3"/><rect x="1833" y="17" width="1" height="3"/><rect x="1841" y="17" width="1" height="3"/><rect x="1849" y="17" width="1" height="3"/><rect x="1857" y="17" width="1" height="3"/><rect x="1865" y="17" width="1" height="3"/><rect x="1873" y="3" width="1" height="17"/><rect x="1881" y="17" width="1" height="3"/><rect x="1889" y="17" width="1" height="3"/><rect x="1897" y="17" width="1" height="3"/><rect x="1905" y="17" width="1" height="3"/><rect x="1913" y="17" width="1" height="3"/></g><rect x="1787" y="7" width="1" height="13" fill="#c02020" opacity=".8"/></svg>
<div class="rl" style="left:359px;top:102px;font-size:12.5px;transform-origin:0 0;transform:scaleX(.84)">0</div>
<div class="rl" style="left:439px;top:102px;font-size:12.5px;transform-origin:0 0;transform:scaleX(.84)">100</div>
<div class="rl" style="left:519px;top:102px;font-size:12.5px;transform-origin:0 0;transform:scaleX(.84)">200</div>
<div class="rl" style="left:599px;top:102px;font-size:12.5px;transform-origin:0 0;transform:scaleX(.84)">300</div>
<div class="rl" style="left:679px;top:102px;font-size:12.5px;transform-origin:0 0;transform:scaleX(.84)">400</div>
<div class="rl" style="left:759px;top:102px;font-size:12.5px;transform-origin:0 0;transform:scaleX(.84)">500</div>
<div class="rl" style="left:839px;top:102px;font-size:12.5px;transform-origin:0 0;transform:scaleX(.84)">600</div>
<div class="rl" style="left:919px;top:102px;font-size:12.5px;transform-origin:0 0;transform:scaleX(.84)">700</div>
<div class="rl" style="left:999px;top:102px;font-size:12.5px;transform-origin:0 0;transform:scaleX(.84)">800</div>
<div class="rl" style="left:1079px;top:102px;font-size:12.5px;transform-origin:0 0;transform:scaleX(.84)">900</div>
<div class="rl" style="left:1159px;top:102px;font-size:12.5px;transform-origin:0 0;transform:scaleX(.84)">1000</div>
<div class="rl" style="left:1239px;top:102px;font-size:12.5px;transform-origin:0 0;transform:scaleX(.84)">1100</div>
<div class="rl" style="left:1319px;top:102px;font-size:12.5px;transform-origin:0 0;transform:scaleX(.84)">1200</div>
<div class="rl" style="left:1399px;top:102px;font-size:12.5px;transform-origin:0 0;transform:scaleX(.84)">1300</div>
<div class="rl" style="left:1479px;top:102px;font-size:12.5px;transform-origin:0 0;transform:scaleX(.84)">1400</div>
<div class="rl" style="left:1559px;top:102px;font-size:12.5px;transform-origin:0 0;transform:scaleX(.84)">1500</div>
<div class="rl" style="left:1639px;top:102px;font-size:12.5px;transform-origin:0 0;transform:scaleX(.84)">1600</div>
<div class="rl" style="left:1719px;top:102px;font-size:12.5px;transform-origin:0 0;transform:scaleX(.84)">1700</div>
<div class="rl" style="left:1799px;top:102px;font-size:12.5px;transform-origin:0 0;transform:scaleX(.84)">1800</div>
<div class="rl" style="left:1879px;top:102px;font-size:12.5px;transform-origin:0 0;transform:scaleX(.84)">1900</div>
<svg class="a" style="left:304px;top:0" width="22" height="1136"><g fill="#f0f0f0"><rect x="4" y="193" width="17" height="1"/><rect x="18" y="201" width="3" height="1"/><rect x="18" y="209" width="3" height="1"/><rect x="18" y="217" width="3" height="1"/><rect x="18" y="225" width="3" height="1"/><rect x="18" y="233" width="3" height="1"/><rect x="18" y="241" width="3" height="1"/><rect x="18" y="249" width="3" height="1"/><rect x="18" y="257" width="3" height="1"/><rect x="18" y="265" width="3" height="1"/><rect x="4" y="273" width="17" height="1"/><rect x="18" y="281" width="3" height="1"/><rect x="18" y="289" width="3" height="1"/><rect x="18" y="297" width="3" height="1"/><rect x="18" y="305" width="3" height="1"/><rect x="18" y="313" width="3" height="1"/><rect x="18" y="321" width="3" height="1"/><rect x="18" y="329" width="3" height="1"/><rect x="18" y="337" width="3" height="1"/><rect x="18" y="345" width="3" height="1"/><rect x="4" y="353" width="17" height="1"/><rect x="18" y="361" width="3" height="1"/><rect x="18" y="369" width="3" height="1"/><rect x="18" y="377" width="3" height="1"/><rect x="18" y="385" width="3" height="1"/><rect x="18" y="393" width="3" height="1"/><rect x="18" y="401" width="3" height="1"/><rect x="18" y="409" width="3" height="1"/><rect x="18" y="417" width="3" height="1"/><rect x="18" y="425" width="3" height="1"/><rect x="4" y="433" width="17" height="1"/><rect x="18" y="441" width="3" height="1"/><rect x="18" y="449" width="3" height="1"/><rect x="18" y="457" width="3" height="1"/><rect x="18" y="465" width="3" height="1"/><rect x="18" y="473" width="3" height="1"/><rect x="18" y="481" width="3" height="1"/><rect x="18" y="489" width="3" height="1"/><rect x="18" y="497" width="3" height="1"/><rect x="18" y="505" width="3" height="1"/><rect x="4" y="513" width="17" height="1"/><rect x="18" y="521" width="3" height="1"/><rect x="18" y="529" width="3" height="1"/><rect x="18" y="537" width="3" height="1"/><rect x="18" y="545" width="3" height="1"/><rect x="18" y="553" width="3" height="1"/><rect x="18" y="561" width="3" height="1"/><rect x="18" y="569" width="3" height="1"/><rect x="18" y="577" width="3" height="1"/><rect x="18" y="585" width="3" height="1"/><rect x="4" y="593" width="17" height="1"/><rect x="18" y="601" width="3" height="1"/><rect x="18" y="609" width="3" height="1"/><rect x="18" y="617" width="3" height="1"/><rect x="18" y="625" width="3" height="1"/><rect x="18" y="633" width="3" height="1"/><rect x="18" y="641" width="3" height="1"/><rect x="18" y="649" width="3" height="1"/><rect x="18" y="657" width="3" height="1"/><rect x="18" y="665" width="3" height="1"/><rect x="4" y="673" width="17" height="1"/><rect x="18" y="681" width="3" height="1"/><rect x="18" y="689" width="3" height="1"/><rect x="18" y="697" width="3" height="1"/><rect x="18" y="705" width="3" height="1"/><rect x="18" y="713" width="3" height="1"/><rect x="18" y="721" width="3" height="1"/><rect x="18" y="729" width="3" height="1"/><rect x="18" y="737" width="3" height="1"/><rect x="18" y="745" width="3" height="1"/><rect x="4" y="753" width="17" height="1"/><rect x="18" y="761" width="3" height="1"/><rect x="18" y="769" width="3" height="1"/><rect x="18" y="777" width="3" height="1"/><rect x="18" y="785" width="3" height="1"/><rect x="18" y="793" width="3" height="1"/><rect x="18" y="801" width="3" height="1"/><rect x="18" y="809" width="3" height="1"/><rect x="18" y="817" width="3" height="1"/><rect x="18" y="825" width="3" height="1"/><rect x="4" y="833" width="17" height="1"/><rect x="18" y="841" width="3" height="1"/><rect x="18" y="849" width="3" height="1"/><rect x="18" y="857" width="3" height="1"/><rect x="18" y="865" width="3" height="1"/><rect x="18" y="873" width="3" height="1"/><rect x="18" y="881" width="3" height="1"/><rect x="18" y="889" width="3" height="1"/><rect x="18" y="897" width="3" height="1"/><rect x="18" y="905" width="3" height="1"/><rect x="4" y="913" width="17" height="1"/><rect x="18" y="921" width="3" height="1"/><rect x="18" y="929" width="3" height="1"/><rect x="18" y="937" width="3" height="1"/><rect x="18" y="945" width="3" height="1"/><rect x="18" y="953" width="3" height="1"/><rect x="18" y="961" width="3" height="1"/><rect x="18" y="969" width="3" height="1"/><rect x="18" y="977" width="3" height="1"/><rect x="18" y="985" width="3" height="1"/><rect x="4" y="993" width="17" height="1"/><rect x="18" y="1001" width="3" height="1"/><rect x="18" y="1009" width="3" height="1"/><rect x="18" y="1017" width="3" height="1"/><rect x="18" y="1025" width="3" height="1"/><rect x="18" y="1033" width="3" height="1"/><rect x="18" y="1041" width="3" height="1"/><rect x="18" y="1049" width="3" height="1"/><rect x="18" y="1057" width="3" height="1"/><rect x="18" y="1065" width="3" height="1"/><rect x="4" y="1073" width="17" height="1"/><rect x="18" y="1081" width="3" height="1"/><rect x="18" y="1089" width="3" height="1"/><rect x="18" y="1097" width="3" height="1"/><rect x="18" y="1105" width="3" height="1"/><rect x="18" y="1113" width="3" height="1"/><rect x="18" y="1121" width="3" height="1"/><rect x="18" y="1129" width="3" height="1"/></g><rect x="9" y="790" width="12" height="1.2" fill="#b02020" opacity=".7" stroke-dasharray="2 2"/></svg>
<div class="rl" style="left:319px;top:199px;font-size:12.5px;transform-origin:0 0;transform:rotate(90deg) scaleX(.93)">0</div>
<div class="rl" style="left:319px;top:279px;font-size:12.5px;transform-origin:0 0;transform:rotate(90deg) scaleX(.93)">100</div>
<div class="rl" style="left:319px;top:359px;font-size:12.5px;transform-origin:0 0;transform:rotate(90deg) scaleX(.93)">200</div>
<div class="rl" style="left:319px;top:439px;font-size:12.5px;transform-origin:0 0;transform:rotate(90deg) scaleX(.93)">300</div>
<div class="rl" style="left:319px;top:519px;font-size:12.5px;transform-origin:0 0;transform:rotate(90deg) scaleX(.93)">400</div>
<div class="rl" style="left:319px;top:599px;font-size:12.5px;transform-origin:0 0;transform:rotate(90deg) scaleX(.93)">500</div>
<div class="rl" style="left:319px;top:679px;font-size:12.5px;transform-origin:0 0;transform:rotate(90deg) scaleX(.93)">600</div>
<div class="rl" style="left:319px;top:759px;font-size:12.5px;transform-origin:0 0;transform:rotate(90deg) scaleX(.93)">700</div>
<div class="rl" style="left:319px;top:839px;font-size:12.5px;transform-origin:0 0;transform:rotate(90deg) scaleX(.93)">800</div>
<div class="rl" style="left:319px;top:919px;font-size:12.5px;transform-origin:0 0;transform:rotate(90deg) scaleX(.93)">900</div>
<div class="rl" style="left:319px;top:999px;font-size:12.5px;transform-origin:0 0;transform:rotate(90deg) scaleX(.93)">1000</div>
<div class="rl" style="left:319px;top:1079px;font-size:12.5px;transform-origin:0 0;transform:rotate(90deg) scaleX(.93)">1100</div>
<div class="a" style="left:353px;top:193px;width:1536px;height:864px;background:#000"></div>
<svg class="a" style="left:940px;top:520px" width="300" height="170">
<defs>
<filter id="blur" x="-20%" y="-30%" width="140%" height="160%"><feGaussianBlur stdDeviation="2.6"/></filter>
<radialGradient id="pl" cx="50%" cy="60%" r="55%"><stop offset="0" stop-color="#eedcb6"/><stop offset=".65" stop-color="#dcc9a2"/><stop offset="1" stop-color="#7c7662"/></radialGradient>
<linearGradient id="bands" x1="0" y1="0" x2="0" y2="1"><stop offset="0" stop-color="#203038" stop-opacity=".45"/><stop offset=".25" stop-color="#000" stop-opacity="0"/><stop offset=".52" stop-color="#6a5038" stop-opacity="0"/><stop offset=".6" stop-color="#6a5038" stop-opacity=".22"/><stop offset=".66" stop-color="#6a5038" stop-opacity="0"/><stop offset=".72" stop-color="#fff2c8" stop-opacity=".35"/><stop offset=".86" stop-color="#fff2c8" stop-opacity="0"/></linearGradient>
<clipPath id="front"><rect x="0" y="83.5" width="300" height="100"/></clipPath>
</defs>
<g filter="url(#blur)">
<g><path d="M22.5 83.5a126.0 60.0 0 1 0 252.0 0a126.0 60.0 0 1 0 -252.0 0zM37.0 83.5a111.5 52.3 0 1 0 223.0 0a111.5 52.3 0 1 0 -223.0 0z" fill="#7a8288" fill-rule="evenodd"/><path d="M37.0 83.5a111.5 52.3 0 1 0 223.0 0a111.5 52.3 0 1 0 -223.0 0zM40.5 83.5a108.0 50.5 0 1 0 216.0 0a108.0 50.5 0 1 0 -216.0 0z" fill="#484c52" fill-rule="evenodd"/><path d="M40.5 83.5a108.0 50.5 0 1 0 216.0 0a108.0 50.5 0 1 0 -216.0 0zM58.5 83.5a90.0 41.0 0 1 0 180.0 0a90.0 41.0 0 1 0 -180.0 0z" fill="#cacac2" fill-rule="evenodd"/><path d="M58.5 83.5a90.0 41.0 0 1 0 180.0 0a90.0 41.0 0 1 0 -180.0 0zM65.0 83.5a83.5 37.5 0 1 0 167.0 0a83.5 37.5 0 1 0 -167.0 0z" fill="#6c6c68" fill-rule="evenodd"/></g>
<ellipse cx="108" cy="44" rx="9" ry="17" fill="#0a0e14" opacity=".85" transform="rotate(38 108 44)"/>
<ellipse cx="194" cy="44" rx="11" ry="18" fill="#0a0e14" opacity=".85" transform="rotate(-45 194 44)"/>
<ellipse cx="149.5" cy="78.5" rx="54" ry="49" fill="url(#pl)"/>
<ellipse cx="149.5" cy="78.5" rx="54" ry="49" fill="url(#bands)"/>
<g clip-path="url(#front)"><path d="M22.5 83.5a126.0 60.0 0 1 0 252.0 0a126.0 60.0 0 1 0 -252.0 0zM37.0 83.5a111.5 52.3 0 1 0 223.0 0a111.5 52.3 0 1 0 -223.0 0z" fill="#7a8288" fill-rule="evenodd"/><path d="M37.0 83.5a111.5 52.3 0 1 0 223.0 0a111.5 52.3 0 1 0 -223.0 0zM40.5 83.5a108.0 50.5 0 1 0 216.0 0a108.0 50.5 0 1 0 -216.0 0z" fill="#484c52" fill-rule="evenodd"/><path d="M40.5 83.5a108.0 50.5 0 1 0 216.0 0a108.0 50.5 0 1 0 -216.0 0zM58.5 83.5a90.0 41.0 0 1 0 180.0 0a90.0 41.0 0 1 0 -180.0 0z" fill="#cacac2" fill-rule="evenodd"/><path d="M58.5 83.5a90.0 41.0 0 1 0 180.0 0a90.0 41.0 0 1 0 -180.0 0zM65.0 83.5a83.5 37.5 0 1 0 167.0 0a83.5 37.5 0 1 0 -167.0 0z" fill="#6c6c68" fill-rule="evenodd"/></g>
<path d="M58.5 83.5a90.0 41.0 0 1 0 180.0 0a90.0 41.0 0 1 0 -180.0 0z" fill="none" stroke="#262626" stroke-width="3" clip-path="url(#front)" opacity=".7"/>
<path d="M23.0 83.5a125.5 59.8 0 1 0 251.0 0a125.5 59.8 0 1 0 -251.0 0z" fill="none" stroke="#5878a8" stroke-width="2.2" opacity=".5"/>
</g>
</svg>


<!-- STATUS BAR -->
<div class="a" style="left:0;top:1136px;width:1916px;height:20px;background:#303030"></div>
<div class="a" style="left:0;top:1136px;width:1916px;height:8px;background:linear-gradient(#2c2c2c,#444654 30%,#3c3f4c)"></div>
<div class="a" style="left:611px;top:1138px;width:1px;height:18px;background:#1e1e1e"></div><div class="a" style="left:612px;top:1140px;width:1px;height:16px;background:#6a6a6a"></div>
<div class="a" style="left:1020px;top:1138px;width:1px;height:18px;background:#1e1e1e"></div><div class="a" style="left:1021px;top:1140px;width:1px;height:16px;background:#6a6a6a"></div>
<div class="a" style="left:1550px;top:1138px;width:1px;height:18px;background:#1e1e1e"></div><div class="a" style="left:1551px;top:1140px;width:1px;height:16px;background:#6a6a6a"></div>
<div class="a" style="left:1757px;top:1138px;width:1px;height:18px;background:#1e1e1e"></div><div class="a" style="left:1758px;top:1140px;width:1px;height:16px;background:#6a6a6a"></div>
<svg class="a" style="left:1765px;top:1139px" width="8" height="17"><path d="M2.5 11V3a1.5 1.5 0 0 1 3 0v8a2.8 2.8 0 1 1-3 0z" fill="#3a8cb0" stroke="#0c2a3a" stroke-width="1"/><path d="M4 4v9" stroke="#7cc4dc" stroke-width="1"/></svg>


<!-- TEXTS -->
<div class="tx" style="left:22.0px;top:3.8px;color:#000;transform:scaleX(1.000)">ToupSky</div>
<div class="tx" style="left:88.6px;top:53.2px;color:#f0f0f0;transform:scaleX(0.920)">NA</div>
<div class="tx" style="left:303.5px;top:53.2px;color:#f0f0f0;transform:scaleX(0.935)">80%</div>
<div class="tx" style="left:2.5px;top:76.5px;color:#f2f2f2;transform:scaleX(0.978)">Kamera</div>
<div class="tx" style="left:17.6px;top:139.0px;color:#ececec;transform:scaleX(0.908)">GPCMOS02000KPA</div>
<div class="tx" style="left:55.5px;top:215.0px;color:#ececec;transform:scaleX(0.899)">Schnappschuss</div>
<div class="tx" style="left:196.4px;top:215.0px;color:#ececec;transform:scaleX(0.875)">Aufnahme</div>
<div class="tx" style="left:10.0px;top:254.4px;color:#ececec;transform:scaleX(0.927)">Auflösung:</div>
<div class="tx" style="left:88.1px;top:255.6px;color:#ececec;transform:scaleX(0.926)">1920 × 1080</div>
<div class="tx" style="left:8.5px;top:280.2px;color:#ececec;transform:scaleX(0.959)">Format:</div>
<div class="tx" style="left:85.9px;top:283.2px;color:#ececec;transform:scaleX(0.880)">RGB</div>
<div class="tx" style="left:10.0px;top:308.3px;color:#ececec;transform:scaleX(0.924)">Verstärkung:</div>
<div class="tx" style="left:249.0px;top:308.3px;color:#ececec;transform:scaleX(0.995)">5,00</div>
<div class="tx" style="left:29.7px;top:357.6px;color:#050505;transform:scaleX(0.881)">Video-Modus</div>
<div class="tx" style="left:33.0px;top:377.0px;color:#050505;transform:scaleX(0.894)">Auto Belichtung</div>
<div class="tx" style="left:15.7px;top:404.0px;color:#ececec;transform:scaleX(0.896)">Belichtungs Ziel:</div>
<div class="tx" style="left:243.8px;top:409.7px;color:#ececec;transform:scaleX(0.944)">120</div>
<div class="tx" style="left:15.1px;top:453.6px;color:#ececec;transform:scaleX(0.909)">Belichtungszeit:</div>
<div class="tx" style="left:234.1px;top:455.2px;color:#ececec;transform:scaleX(0.897)">350ms</div>
<div class="tx" style="left:29.7px;top:516.0px;color:#050505;transform:scaleX(0.899)">Triggermodus</div>
<div class="tx" style="left:13.8px;top:538.3px;color:#ececec;transform:scaleX(0.910)">Triggerquelle:</div>
<div class="tx" style="left:127.6px;top:541.0px;color:#8c8c8c;transform:scaleX(0.960)">Software</div>
<div class="tx" style="left:12.9px;top:562.3px;color:#ececec;transform:scaleX(0.907)">Belichtungszeit:</div>
<div class="tx" style="left:35.3px;top:585.7px;color:#ececec;transform:scaleX(0.920)">h</div>
<div class="tx" style="left:81.2px;top:585.7px;color:#ececec;transform:scaleX(0.920)">m</div>
<div class="tx" style="left:128.8px;top:585.7px;color:#ececec;transform:scaleX(0.920)">s</div>
<div class="tx" style="left:171.1px;top:585.7px;color:#ececec;transform:scaleX(0.920)">ms</div>
<div class="tx" style="left:222.8px;top:585.7px;color:#ececec;transform:scaleX(0.920)">µs</div>
<div class="tx" style="left:42.9px;top:647.0px;color:#ececec;transform:scaleX(0.898)">Einzelne</div>
<div class="tx" style="left:200.7px;top:647.0px;color:#ececec;transform:scaleX(0.971)">Loop</div>
<div class="tx" style="left:25.4px;top:681.3px;color:#ececec;transform:scaleX(0.909)">Sequenz</div>
<div class="tx" style="left:207.5px;top:681.3px;color:#ececec;transform:scaleX(0.900)">Options...</div>
<div class="tx" style="left:7.1px;top:763.2px;color:#ececec;transform:scaleX(1.000)">Rot:</div>
<div class="tx" style="left:245.0px;top:763.2px;color:#ececec;transform:scaleX(0.950)">-56</div>
<div class="tx" style="left:7.6px;top:812.5px;color:#ececec;transform:scaleX(0.943)">Grün:</div>
<div class="tx" style="left:245.0px;top:812.5px;color:#ececec;transform:scaleX(0.975)">-71</div>
<div class="tx" style="left:6.7px;top:860.0px;color:#ececec;transform:scaleX(0.936)">Blau:</div>
<div class="tx" style="left:254.8px;top:860.0px;color:#ececec;transform:scaleX(0.920)">0</div>
<div class="tx" style="left:36.8px;top:920.6px;color:#ececec;transform:scaleX(0.907)">Weißabgleich</div>
<div class="tx" style="left:165.5px;top:920.6px;color:#ececec;transform:scaleX(0.895)">Voreinstellungen</div>
<div class="tx" style="left:22.0px;top:1117.0px;color:#f0f0f0;transform:scaleX(1.023)">Rückgängig/Wiederholen</div>
<div class="tx" style="left:193.0px;top:1117.0px;color:#f4f4f4;transform:scaleX(0.995)">Kamera</div>
<div class="tx" style="left:5.0px;top:1141.0px;color:#f0f0f0;transform:scaleX(0.917)">GPCMOS02000KPA</div>
<div class="tx" style="left:1024.0px;top:1141.0px;color:#f0f0f0;transform:scaleX(0.961)">Bildrate: 3.9; Einzelbild: 3669</div>
<div class="tx" style="left:1554.0px;top:1141.0px;color:#f0f0f0;transform:scaleX(0.954)">1920 × 1080</div>
</body></html>
